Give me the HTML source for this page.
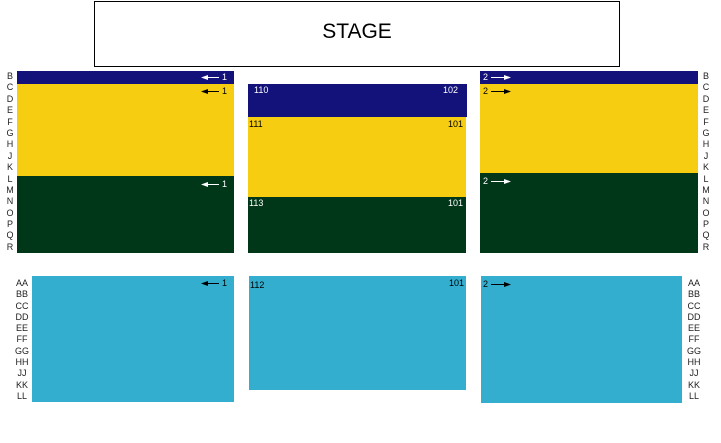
<!DOCTYPE html>
<html><head><meta charset="utf-8"><style>
body{margin:0;width:721px;height:443px;background:#fff;position:relative;overflow:hidden;font-family:"Liberation Sans",sans-serif;}
.a{position:absolute;}
.n{background:#12127a}.y{background:#f6cd10}.g{background:#003719}.c{background:#33aecf}
.t{position:absolute;font-size:9px;line-height:9px}
.w{color:#fff}.k{color:#000}
.col{position:absolute;font-size:9px;text-align:center;color:#222;width:20px}
.col div{height:11.4px;line-height:11.4px}
.col2 div{height:11.3px;line-height:11.3px}
</style></head><body>
<div class="a" style="left:94px;top:1px;width:524px;height:64px;border:1px solid #000;font-size:21px;text-align:center;line-height:60px;">STAGE</div>

<div class="col" style="left:0;top:71px"><div>B</div><div>C</div><div>D</div><div>E</div><div>F</div><div>G</div><div>H</div><div>J</div><div>K</div><div>L</div><div>M</div><div>N</div><div>O</div><div>P</div><div>Q</div><div>R</div></div>
<div class="col" style="left:696px;top:71px"><div>B</div><div>C</div><div>D</div><div>E</div><div>F</div><div>G</div><div>H</div><div>J</div><div>K</div><div>L</div><div>M</div><div>N</div><div>O</div><div>P</div><div>Q</div><div>R</div></div>

<div class="a n" style="left:17px;top:71px;width:217px;height:13px"></div>
<div class="a y" style="left:17px;top:84px;width:217px;height:92px"></div>
<div class="a g" style="left:17px;top:176px;width:217px;height:77px"></div>

<div class="a n" style="left:248px;top:84px;width:219px;height:33px"></div>
<div class="a y" style="left:248px;top:117px;width:218px;height:80px"></div>
<div class="a g" style="left:248px;top:197px;width:218px;height:56px"></div>

<div class="a n" style="left:480px;top:71px;width:218px;height:13px"></div>
<div class="a y" style="left:480px;top:84px;width:218px;height:89px"></div>
<div class="a g" style="left:480px;top:173px;width:218px;height:80px"></div>

<div class="a c" style="left:32px;top:276px;width:202px;height:126px"></div>
<div class="a c" style="left:249px;top:276px;width:217px;height:114px"></div>
<div class="a c" style="left:481px;top:276px;width:201px;height:127px"></div>

<div class="col col2" style="left:12px;top:278px"><div>AA</div><div>BB</div><div>CC</div><div>DD</div><div>EE</div><div>FF</div><div>GG</div><div>HH</div><div>JJ</div><div>KK</div><div>LL</div></div>
<div class="col col2" style="left:684px;top:278px"><div>AA</div><div>BB</div><div>CC</div><div>DD</div><div>EE</div><div>FF</div><div>GG</div><div>HH</div><div>JJ</div><div>KK</div><div>LL</div></div>

<svg class="a" style="left:0;top:0" width="721" height="443">
<g stroke-width="1">
<g fill="#fff" stroke="#fff"><line x1="205" y1="77.5" x2="219" y2="77.5"/><polygon points="201,77.5 208,75 208,80" stroke="none"/></g>
<g fill="#000" stroke="#000"><line x1="205" y1="91.5" x2="219" y2="91.5"/><polygon points="201,91.5 208,89 208,94" stroke="none"/></g>
<g fill="#fff" stroke="#fff"><line x1="205" y1="184.5" x2="219" y2="184.5"/><polygon points="201,184.5 208,182 208,187" stroke="none"/></g>
<g fill="#000" stroke="#000"><line x1="205" y1="283.5" x2="219" y2="283.5"/><polygon points="201,283.5 208,281 208,286" stroke="none"/></g>
<g fill="#fff" stroke="#fff"><line x1="491" y1="77.5" x2="506" y2="77.5"/><polygon points="511,77.5 504,75 504,80" stroke="none"/></g>
<g fill="#000" stroke="#000"><line x1="491" y1="91.5" x2="506" y2="91.5"/><polygon points="511,91.5 504,89 504,94" stroke="none"/></g>
<g fill="#fff" stroke="#fff"><line x1="491" y1="181.5" x2="506" y2="181.5"/><polygon points="511,181.5 504,179 504,184" stroke="none"/></g>
<g fill="#000" stroke="#000"><line x1="491" y1="284.5" x2="506" y2="284.5"/><polygon points="511,284.5 504,282 504,287" stroke="none"/></g>
</g></svg>
<div class="t w" style="left:222px;top:73px">1</div>
<div class="t k" style="left:222px;top:87px">1</div>
<div class="t w" style="left:222px;top:180px">1</div>
<div class="t k" style="left:222px;top:279px">1</div>
<div class="t w" style="left:483px;top:73px">2</div>
<div class="t k" style="left:483px;top:87px">2</div>
<div class="t w" style="left:483px;top:177px">2</div>
<div class="t k" style="left:483px;top:280px">2</div>

<div class="t w" style="left:254px;top:86px">110</div>
<div class="t w" style="left:443px;top:86px">102</div>
<div class="t k" style="left:249px;top:120px">111</div>
<div class="t k" style="left:448px;top:120px">101</div>
<div class="t w" style="left:249px;top:199px">113</div>
<div class="t w" style="left:448px;top:199px">101</div>
<div class="t k" style="left:250px;top:281px">112</div>
<div class="t k" style="left:449px;top:279px">101</div>
</body></html>
